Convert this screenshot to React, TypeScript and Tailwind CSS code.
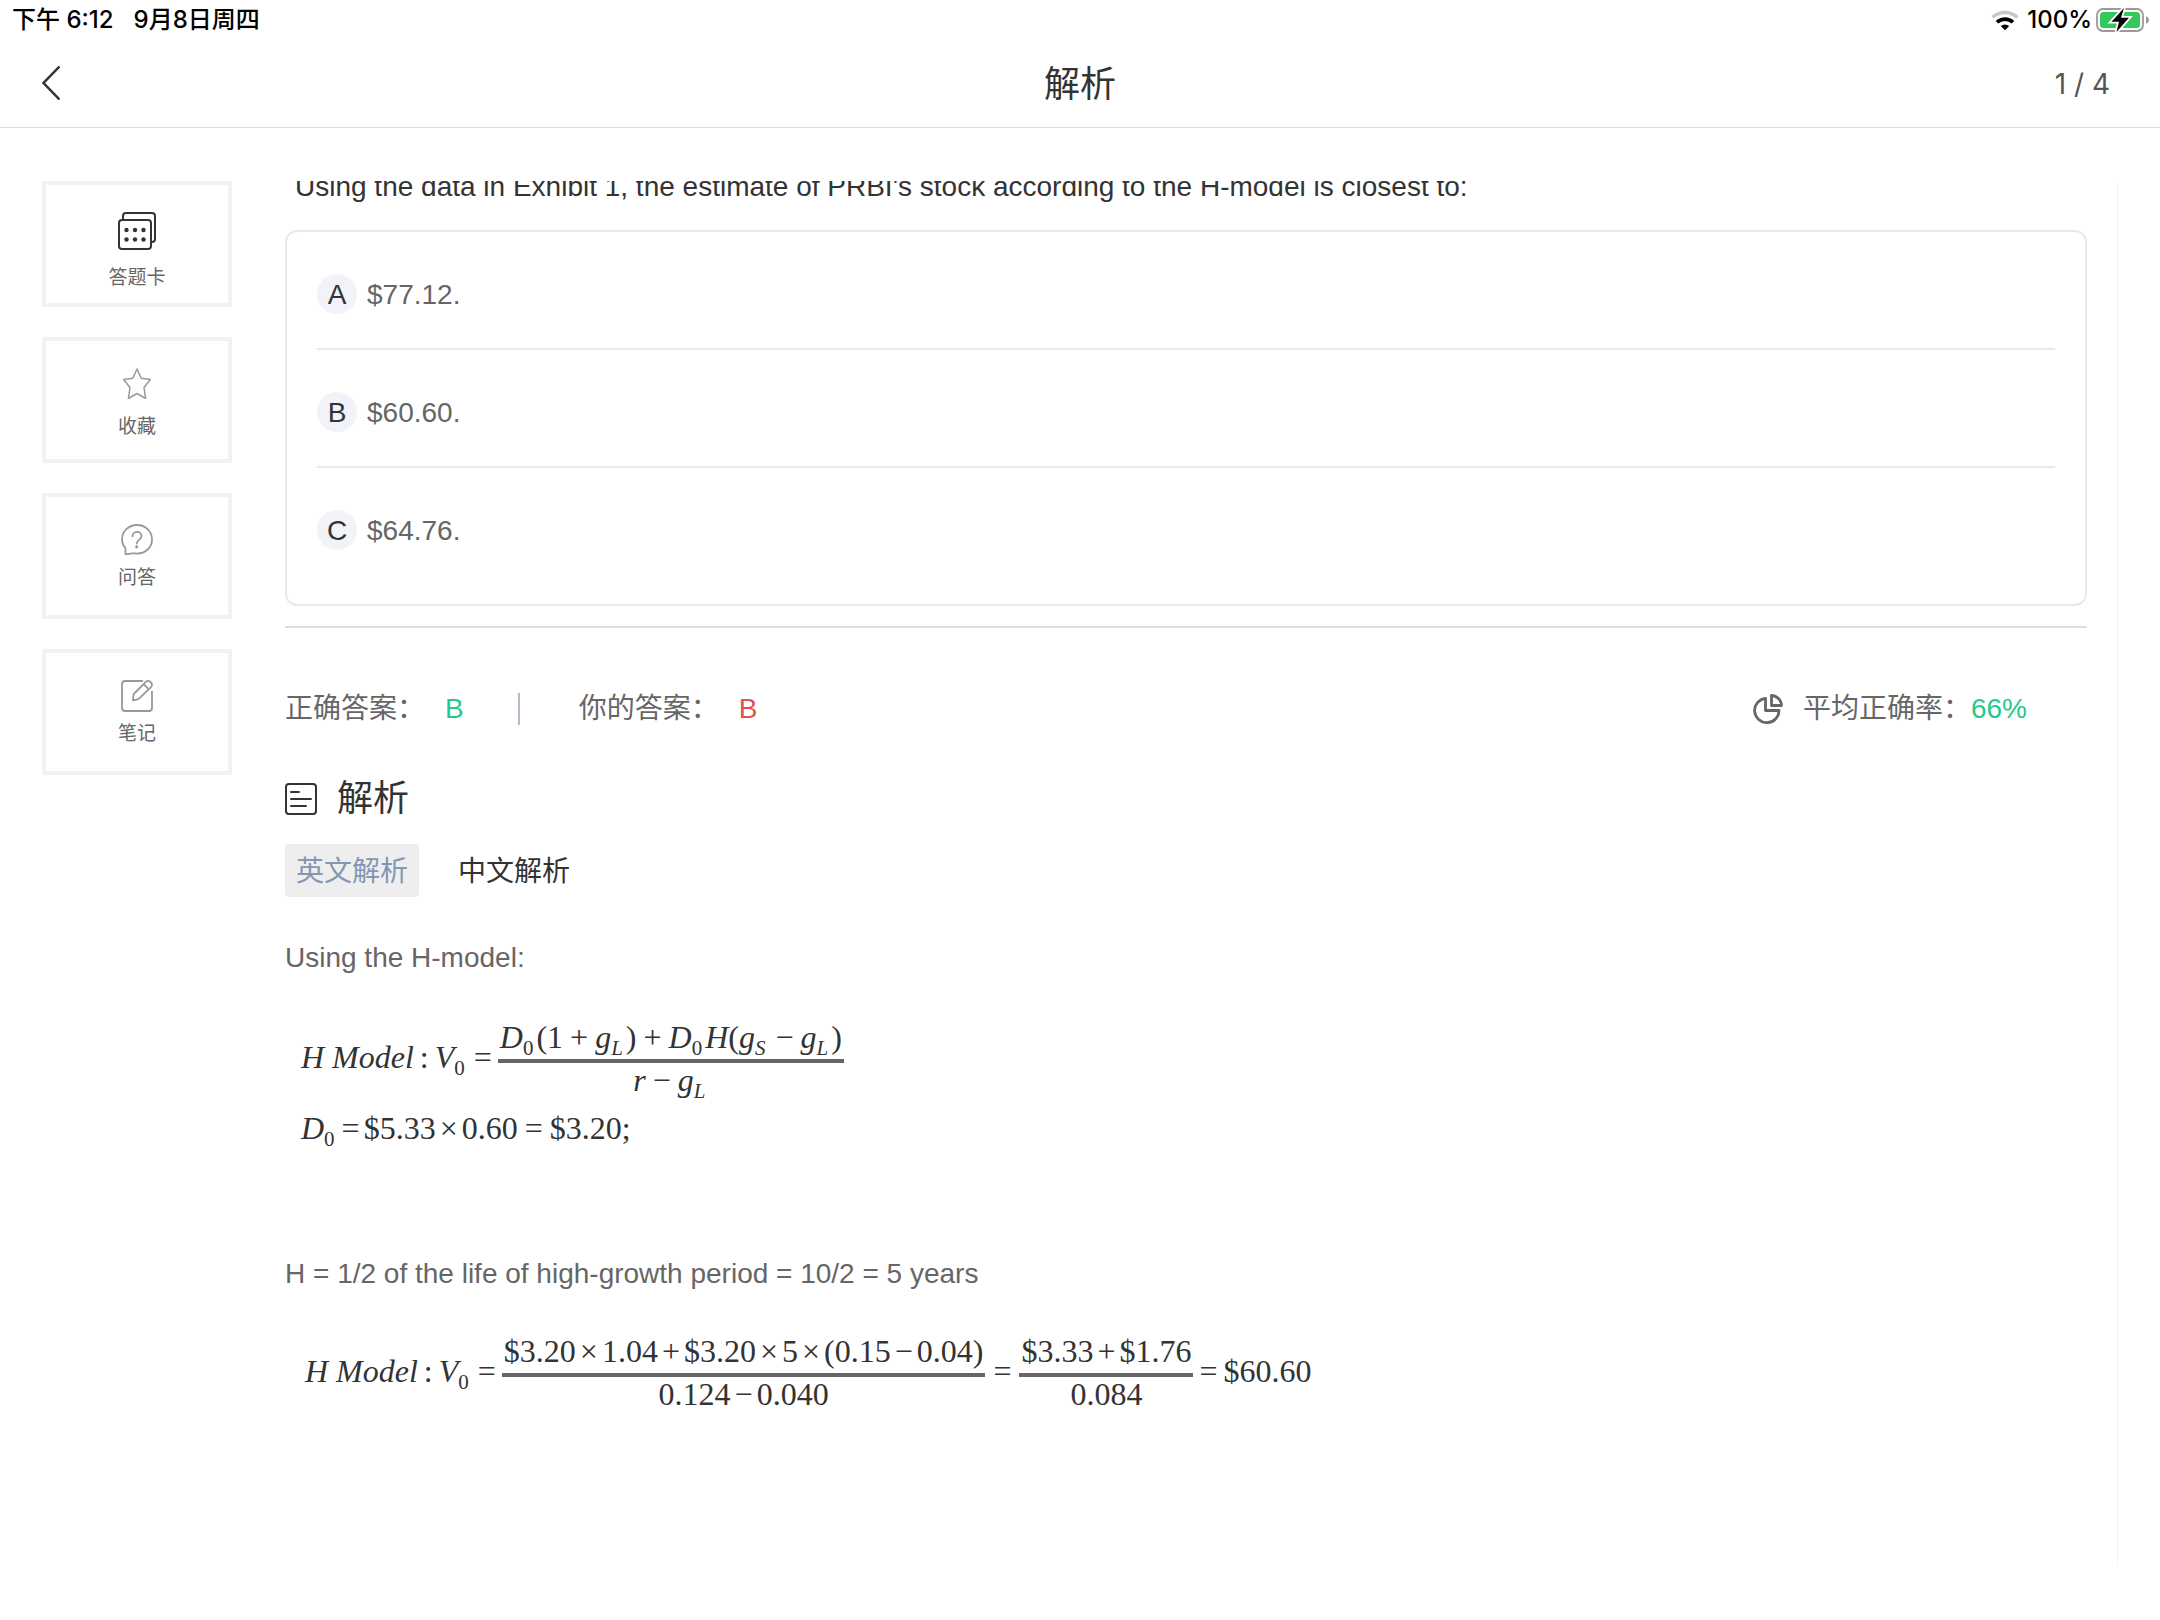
import React, { useState } from "react";

type Lang = 'en' | 'zh';

interface SideButtonProps {
  label: string;
  icon: React.ReactNode;
  labelClass: string;
}

const CardIcon = () => (
  <svg className="size-[38px] text-[#333]" viewBox="0 0 38 38" fill="none" stroke="currentColor" strokeWidth="2">
    <path d="M5 8V4a3 3 0 0 1 3-3h26a3 3 0 0 1 3 3v23a3 3 0 0 1-3 3h-1" />
    <rect x="1" y="8" width="32" height="29" rx="3" />
    <g fill="currentColor" stroke="none">
      <circle cx="8.500" cy="18" r="2.200" />
      <circle cx="17" cy="18" r="2.200" />
      <circle cx="25.500" cy="18" r="2.200" />
      <circle cx="8.500" cy="27.500" r="2.200" />
      <circle cx="17" cy="27.500" r="2.200" />
      <circle cx="25.500" cy="27.500" r="2.200" />
    </g>
  </svg>
);

const StarIcon = () => (
  <svg className="h-[31px] w-7 text-[#999]" viewBox="0 0 28 31" fill="none" stroke="currentColor" strokeWidth="1.500" strokeLinejoin="round">
    <path d="M14 1l4.200 9.300 9.200 1.200-6.400 8 1.600 11L14 25.500 5.400 30.500 7 19.500l-6.400-8 9.200-1.200z" />
  </svg>
);

const QuestionIcon = () => (
  <svg className="size-8 text-[#999]" viewBox="0 0 32 32" fill="none" stroke="currentColor" strokeWidth="1.800" strokeLinecap="round" strokeLinejoin="round">
    <path d="M4.500 30.300V24C2.200 21.500 1 18.500 1 15.400 1 7.400 7.700 1 16 1s15 6.400 15 14.400-6.700 14.200-15 14.200c-1.600 0-3.200-.3-4.700-.3z" />
    <path d="M11.500 12.300c0-2.600 2-4.500 4.500-4.500s4.600 1.900 4.600 4.300c0 3.300-4.900 3.900-4.900 7.500" />
    <circle cx="15.700" cy="22.800" r="0.700" fill="currentColor" />
  </svg>
);

const NoteIcon = () => (
  <svg className="size-8 text-[#999]" viewBox="0 0 32 32" fill="none" stroke="currentColor" strokeWidth="1.800" strokeLinejoin="round">
    <path d="M22 1H4a3 3 0 0 0-3 3v24a3 3 0 0 0 3 3h24a3 3 0 0 0 3-3V11" />
    <path d="M24.800 1.900a3.200 3.200 0 0 1 4.600 0l.6.600a3.200 3.200 0 0 1 0 4.600L17.500 19.200l-5.700 1.200.9-6.400zM22.600 4.200l5.100 5" />
  </svg>
);

const PieIcon = () => (
  <svg className="size-[30px] text-[#666]" viewBox="0 0 30 30" fill="none" stroke="currentColor" strokeWidth="2.800" strokeLinejoin="round">
    <path d="M12.500 4.300A12.200 12.200 0 1 0 26 16.500H12.500z" />
    <path d="M18.500 1.500v10H28.500a10.300 10.300 0 0 0-10-10z" />
  </svg>
);

const DocIcon = () => (
  <svg className="size-8 text-[#333]" viewBox="0 0 32 32" fill="none" stroke="currentColor" strokeWidth="2" strokeLinecap="round">
    <rect x="1" y="1" width="30" height="30" rx="3" />
    <path d="M6 9h8M6 16h20M6 23h15" />
  </svg>
);

const WifiIcon = () => (
  <svg className="h-[21px] w-7" viewBox="0 0 28 21">
    <path d="M1.500 7.500a18 18 0 0 1 25 0" fill="none" stroke="#c8c8c8" strokeWidth="3.600" />
    <path d="M6 12.300a11.600 11.600 0 0 1 16 0" fill="none" stroke="#000" strokeWidth="3.600" />
    <path d="M9.800 16.100a6 6 0 0 1 8.400 0L14 20.300z" fill="#000" />
  </svg>
);

const BatteryIcon = () => (
  <svg className="h-6 w-[54px] overflow-visible" viewBox="0 0 54 24">
    <rect x="1" y="1" width="46" height="22" rx="6" fill="none" stroke="#9a9a9a" strokeWidth="1.800" />
    <rect x="4" y="4" width="40" height="16" rx="3.500" fill="#34c759" />
    <path d="M50 8.200c1.800.6 3 2 3 3.800s-1.200 3.200-3 3.800z" fill="#9a9a9a" />
    <path d="M28 0L15.500 13.700h7.500L20.500 24 33 9.700h-8z" fill="#000" stroke="#fff" strokeWidth="3.500" paintOrder="stroke" />
  </svg>
);

const SideButton: React.FC<SideButtonProps> = ({ label, icon, labelClass }) => (
  <button className="flex h-[126px] flex-col items-center border-4 border-[#f2f2f2] pt-[27px] text-[19px] leading-7 text-[#666]">
    {icon}
    <span className={labelClass}>{label}</span>
  </button>
);

const Sub = ({ children }: { children: React.ReactNode }) => (
  <sub className="static mr-[3px] align-[-7px] text-[21px]">{children}</sub>
);

const Op = ({ children, tight }: { children: React.ReactNode; tight?: boolean }) => (
  <span className={tight ? 'mx-1' : 'mx-[7px]'}>{children}</span>
);

const Fraction = ({ top, bottom }: { top: React.ReactNode; bottom: React.ReactNode }) => (
  <span className="flex flex-col items-center leading-[34px]">
    <span className="mb-[5px] px-0.5">{top}</span>
    <span className="h-1 w-full bg-[#666]" />
    <span>{bottom}</span>
  </span>
);

const HModelLabel = () => (
  <>
    <span className="pb-1">
      <i>H Model</i><span className="mx-1.5">:</span><i>V</i><Sub>0</Sub>
    </span>
    <span className="mx-1.5 pb-1">=</span>
  </>
);

const sideItems: SideButtonProps[] = [
  { label: '答题卡', icon: <CardIcon />, labelClass: 'mt-3.5' },
  { label: '收藏', icon: <StarIcon />, labelClass: 'mt-3.5' },
  { label: '问答', icon: <QuestionIcon />, labelClass: 'mt-2' },
  { label: '笔记', icon: <NoteIcon />, labelClass: 'mt-2' },
];

const options = [
  { key: 'A', text: '$77.12.' },
  { key: 'B', text: '$60.60.' },
  { key: 'C', text: '$64.76.' },
];

const tabs: { id: Lang; label: string }[] = [
  { id: 'en', label: '英文解析' },
  { id: 'zh', label: '中文解析' },
];

const App = () => {
  const [lang, setLang] = useState<Lang>('en');

  return (
    <div className="flex min-h-screen flex-col bg-white pb-14 font-['Liberation_Sans','Noto_Sans_CJK_SC',sans-serif] text-[28px] leading-10 text-[#666]">
      {/* Status bar */}
      <div className="flex h-[38px] items-center justify-between pt-0.5 pr-2.5 pl-3 font-['Inter','Noto_Sans_CJK_SC',sans-serif] text-2xl font-medium text-black">
        <div className="flex gap-5">
          <span>下午 6:12</span>
          <span>9月8日周四</span>
        </div>
        <div className="flex items-center">
          <WifiIcon />
          <span className="mr-1 ml-2">100%</span>
          <BatteryIcon />
        </div>
      </div>

      {/* Title bar */}
      <header className="grid h-[90px] grid-cols-3 items-center border-b border-[#dcdcdc] px-[42px]">
        <button aria-label="返回" className="justify-self-start text-[#333]">
          <svg className="h-[34px] w-[18px]" viewBox="0 0 18 34" fill="none" stroke="currentColor" strokeWidth="2.500">
            <path d="M17.500 0.500L1.500 17l16 16.500" />
          </svg>
        </button>
        <h1 className="pt-1 text-center text-4xl text-[#333]">解析</h1>
        <span className="pt-0.5 pr-2 text-right font-['Inter',sans-serif] text-[#555]">1 / 4</span>
      </header>

      <div className="flex flex-1 gap-[53px] px-[42px] pt-[53px]">
        <nav className="flex w-[190px] shrink-0 flex-col gap-[30px]">
          {sideItems.map((item) => (
            <SideButton key={item.label} {...item} />
          ))}
        </nav>

        <main className="min-w-0 flex-1 overflow-hidden border-r border-[#f3f3f3] pr-[30px]">
          {/* Question, scrolled partly under the top edge */}
          <p className="-mt-3.5 pl-2.5 text-[#333]">
            Using the data in Exhibit 1, the estimate of PRBI's stock according to the H-model is closest to:
          </p>
          <ul className="mt-[23px] rounded-xl border-2 border-[#e8e8ef] px-[30px] pb-5">
            {options.map((option) => (
              <li key={option.key} className="flex items-center gap-2.5 border-b-2 border-[#e8e8ef] pt-[42px] pb-[34px] last:border-b-0">
                <span className="size-10 rounded-full bg-[#f2f3f8] text-center leading-[42px] text-[#333]">{option.key}</span>
                <span className="h-10 leading-[42px]">{option.text}</span>
              </li>
            ))}
          </ul>
          <hr className="mt-5 border-t-2 border-[#d9deea]" />

          {/* Answers */}
          <div className="mt-[61px] flex items-center pr-[60px]">
            <span>正确答案：</span>
            <span className="ml-5 text-[#26c98c]">B</span>
            <span className="mr-[59px] ml-[54px] h-8 w-0.5 bg-[#b5bccb]" />
            <span>你的答案：</span>
            <span className="ml-5 text-[#e35050]">B</span>
            <span className="ml-auto flex items-center">
              <PieIcon />
              <span className="ml-5">平均正确率：</span>
              <span className="text-[#26c98c]">66%</span>
            </span>
          </div>

          {/* Analysis */}
          <div className="mt-[45px] flex h-[50px] items-center gap-5 text-[#333]">
            <DocIcon />
            <h2 className="text-4xl">解析</h2>
          </div>
          <div className="mt-5 flex gap-7">
            {tabs.map((tab) => (
              <button
                key={tab.id}
                onClick={() => setLang(tab.id)}
                className={`h-[53px] rounded px-[11px] pt-0.5 ${lang === tab.id ? 'bg-[#eee] text-[#8496b3]' : 'text-[#333]'}`}
              >
                {tab.label}
              </button>
            ))}
          </div>

          <p className="mt-[41px]">Using the H-model:</p>
          <div className="mt-[42px] pl-4 font-['Liberation_Serif',serif] text-[32px] text-[#333]">
            <div className="flex items-center">
              <HModelLabel />
              <Fraction
                top={<><i>D</i><Sub>0</Sub>(1<Op>+</Op><i>g</i><Sub><i>L</i></Sub>)<Op>+</Op><i>D</i><Sub>0</Sub><i>H</i>(<i>g</i><Sub><i>S</i></Sub><Op>−</Op><i>g</i><Sub><i>L</i></Sub>)</>}
                bottom={<><i>r</i><Op>−</Op><i>g</i><Sub><i>L</i></Sub></>}
              />
            </div>
            <div className="mt-[11px]">
              <i>D</i><Sub>0</Sub><Op tight>=</Op>$5.33<Op tight>×</Op>0.60<Op>=</Op>$3.20;
            </div>
          </div>

          <p className="mt-[106px]">H = 1/2 of the life of high-growth period = 10/2 = 5 years</p>
          <div className="mt-10 flex items-center pl-5 font-['Liberation_Serif',serif] text-[32px] text-[#333]">
            <HModelLabel />
            <Fraction
              top={<>$3.20<Op tight>×</Op>1.04<Op tight>+</Op>$3.20<Op tight>×</Op>5<Op tight>×</Op>(0.15<Op tight>−</Op>0.04)</>}
              bottom={<>0.124<Op tight>−</Op>0.040</>}
            />
            <span className="mx-2 pb-1">=</span>
            <Fraction top={<>$3.33<Op tight>+</Op>$1.76</>} bottom="0.084" />
            <span className="mx-1.5 pb-1">=</span>
            <span className="pb-1">$60.60</span>
          </div>
        </main>
      </div>
    </div>
  );
};

export default App;
